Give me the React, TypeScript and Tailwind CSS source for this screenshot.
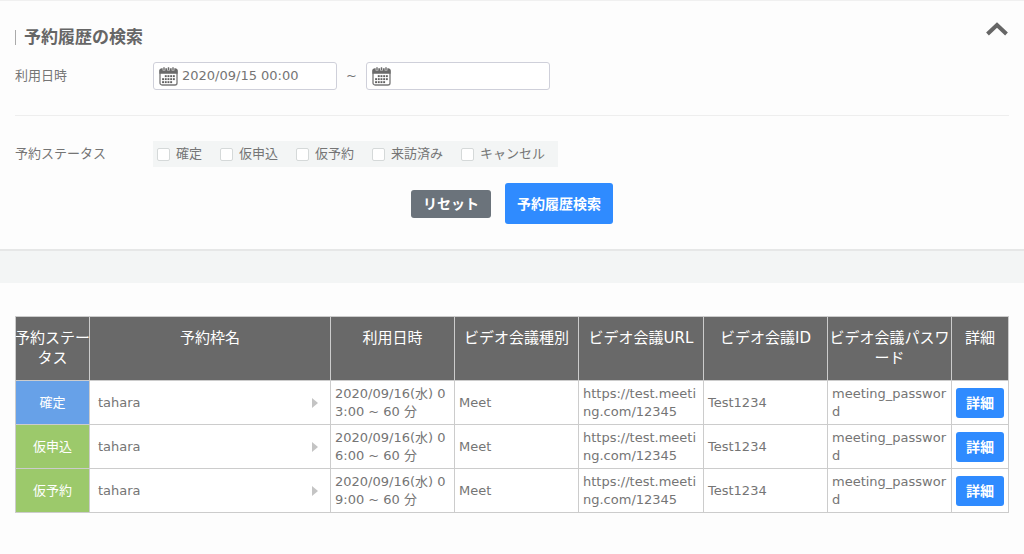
import { useState } from 'react'

type Reservation = {
  id: number
  status: string
  statusClass: string
  name: string
  date: string
  videoType: string
  url: string
  videoId: string
  password: string
}

const STATUSES = ['確定', '仮申込', '仮予約', '来訪済み', 'キャンセル']

const ROWS: Reservation[] = [
  {
    id: 1,
    status: '確定',
    statusClass: 'bg-[#67a1e8]',
    name: 'tahara',
    date: '2020/09/16(水) 03:00 ~ 60 分',
    videoType: 'Meet',
    url: 'https://test.meeting.com/12345',
    videoId: 'Test1234',
    password: 'meeting_password',
  },
  {
    id: 2,
    status: '仮申込',
    statusClass: 'bg-[#9cc96b]',
    name: 'tahara',
    date: '2020/09/16(水) 06:00 ~ 60 分',
    videoType: 'Meet',
    url: 'https://test.meeting.com/12345',
    videoId: 'Test1234',
    password: 'meeting_password',
  },
  {
    id: 3,
    status: '仮予約',
    statusClass: 'bg-[#9cc96b]',
    name: 'tahara',
    date: '2020/09/16(水) 09:00 ~ 60 分',
    videoType: 'Meet',
    url: 'https://test.meeting.com/12345',
    videoId: 'Test1234',
    password: 'meeting_password',
  },
]

const COLUMNS = [
  { label: '予約ステータス', width: 'w-[74px]' },
  { label: '予約枠名', width: '' },
  { label: '利用日時', width: 'w-[124px]' },
  { label: 'ビデオ会議種別', width: 'w-[124px]' },
  { label: 'ビデオ会議URL', width: 'w-[125px]' },
  { label: 'ビデオ会議ID', width: 'w-[124px]' },
  { label: 'ビデオ会議パスワード', width: 'w-[124px]' },
  { label: '詳細', width: 'w-[57px]' },
]

// Day marks on the calendar icon, as [column, row]
const DAYS = [
  [1, 0], [2, 0], [3, 0], [4, 0],
  [0, 1], [1, 1], [2, 1], [3, 1], [4, 1],
  [0, 2], [1, 2], [2, 2], [3, 2],
]

function CalendarIcon() {
  return (
    <svg width="19" height="19" viewBox="0 0 19 19" fill="none" className="shrink-0">
      <rect x="1" y="2.2" width="17" height="15.8" rx="2" fill="#fff" stroke="#777" strokeWidth="1.3" />
      <path d="M.4 6.8V3.4A1.8 1.8 0 0 1 2.2 1.6h14.6a1.8 1.8 0 0 1 1.8 1.8v3.4z" fill="#6a6a6a" />
      <path d="M5 0v3.6M9.5 0v3.6M14 0v3.6" stroke="#fff" strokeWidth="2.6" />
      <path d="M5 .2v3M9.5 .2v3M14 .2v3" stroke="#6a6a6a" strokeWidth="1.4" />
      {DAYS.map(([c, r]) => (
        <rect key={`${c}-${r}`} x={3.1 + c * 2.7} y={8.2 + r * 3} width="1.9" height="1.9" fill="#5f5f5f" />
      ))}
    </svg>
  )
}

function DateField({ label, value, onChange }: { label: string; value: string; onChange: (v: string) => void }) {
  return (
    <label className="flex items-center gap-1 w-[184px] h-7 pl-[5px] pr-2 bg-white border border-[#cfd0da] rounded-[3px]">
      <CalendarIcon />
      <input
        type="text"
        aria-label={label}
        value={value}
        onChange={(e) => onChange(e.target.value)}
        className="min-w-0 flex-1 bg-transparent outline-none"
      />
    </label>
  )
}

export default function App() {
  const [open, setOpen] = useState(true)
  const [from, setFrom] = useState('2020/09/15 00:00')
  const [to, setTo] = useState('')
  const [checked, setChecked] = useState<string[]>([])

  function toggle(status: string) {
    setChecked((c) => (c.includes(status) ? c.filter((s) => s !== status) : [...c, status]))
  }

  function reset() {
    setFrom('')
    setTo('')
    setChecked([])
  }

  return (
    <div className="min-h-screen bg-[#fdfdfd] text-[#757575] text-[13px] leading-[18px] font-['DejaVu_Sans','Noto_Sans_CJK_JP',sans-serif]">
      <section className="border-t border-b-2 border-t-[#f0f0f0] border-b-[#e6e7e7] px-[15px] pt-4 pb-[25px]">
        <div className="flex items-start justify-between">
          <h1 className="flex items-center gap-2 pt-[11px] text-[17px] leading-[18px] font-bold text-[#666]">
            <span className="w-px h-[15px] bg-[#aaa]" />
            予約履歴の検索
          </h1>
          <button aria-label="開閉" onClick={() => setOpen((o) => !o)} className="pt-1 cursor-pointer">
            <svg width="24" height="16" viewBox="0 0 24 16" fill="none" stroke="#666" strokeWidth="4" className={open ? '' : 'rotate-180'}>
              <path d="M2.5 13L12 4l9.5 9" />
            </svg>
          </button>
        </div>

        {open && (
          <>
            <div className="flex items-center pt-4 pb-[25px] border-b border-[#eee]">
              <div className="w-[138px]">利用日時</div>
              <div className="flex items-center gap-[9px]">
                <DateField label="利用日時 開始" value={from} onChange={setFrom} />
                <span>~</span>
                <DateField label="利用日時 終了" value={to} onChange={setTo} />
              </div>
            </div>

            <div className="flex items-center pt-[25px]">
              <div className="w-[138px]">予約ステータス</div>
              <div className="flex items-center gap-[18px] h-[26px] pl-1 pr-[13px] bg-[#f3f5f5]">
                {STATUSES.map((s) => (
                  <label key={s} className="flex items-center gap-[6px] cursor-pointer">
                    <input
                      type="checkbox"
                      checked={checked.includes(s)}
                      onChange={() => toggle(s)}
                      className="appearance-none size-[13px] bg-white border border-[#d5d9d9] rounded-[2px] checked:bg-[#2f8bff]"
                    />
                    {s}
                  </label>
                ))}
              </div>
            </div>

            <div className="flex items-center justify-center gap-[14px] pt-4 text-white font-bold">
              <button onClick={reset} className="h-7 px-3 rounded-[3px] bg-[#6b737b] text-sm cursor-pointer">
                リセット
              </button>
              <button className="h-[41px] px-3 rounded-[3px] bg-[#2f8bff] text-sm cursor-pointer">予約履歴検索</button>
            </div>
          </>
        )}
      </section>

      <div className="h-8 bg-[#f3f5f5]" />

      <section className="px-[15px] pt-[33px] pb-10">
        <table className="w-full table-fixed border-collapse bg-white">
          <thead>
            <tr className="h-16 bg-[#696969] text-white">
              {COLUMNS.map((c) => (
                <th
                  key={c.label}
                  className={`${c.width} border border-[#ccc] pt-[11px] align-top text-[15px] leading-5 font-normal text-center [line-break:anywhere]`}
                >
                  <div className="-mx-px">{c.label}</div>
                </th>
              ))}
            </tr>
          </thead>
          <tbody className="[line-break:anywhere]">
            {ROWS.map((r) => (
              <tr key={r.id} className="h-11">
                <td className={`${r.statusClass} border border-[#ccc] text-center text-white`}>{r.status}</td>
                <td className="border border-[#ccc] pl-2 pr-3">
                  <div className="flex items-center justify-between">
                    {r.name}
                    <svg width="6" height="10" viewBox="0 0 6 10" fill="#c4c4c4">
                      <path d="M0 0l6 5-6 5z" />
                    </svg>
                  </div>
                </td>
                <td className="border border-[#ccc] px-1">{r.date}</td>
                <td className="border border-[#ccc] px-1">{r.videoType}</td>
                <td className="border border-[#ccc] px-1">{r.url}</td>
                <td className="border border-[#ccc] px-1">{r.videoId}</td>
                <td className="border border-[#ccc] px-1">{r.password}</td>
                <td className="border border-[#ccc] px-1">
                  <button className="block w-full h-[30px] rounded-[3px] bg-[#2f8bff] text-white text-sm font-bold cursor-pointer">
                    詳細
                  </button>
                </td>
              </tr>
            ))}
          </tbody>
        </table>
      </section>
    </div>
  )
}
